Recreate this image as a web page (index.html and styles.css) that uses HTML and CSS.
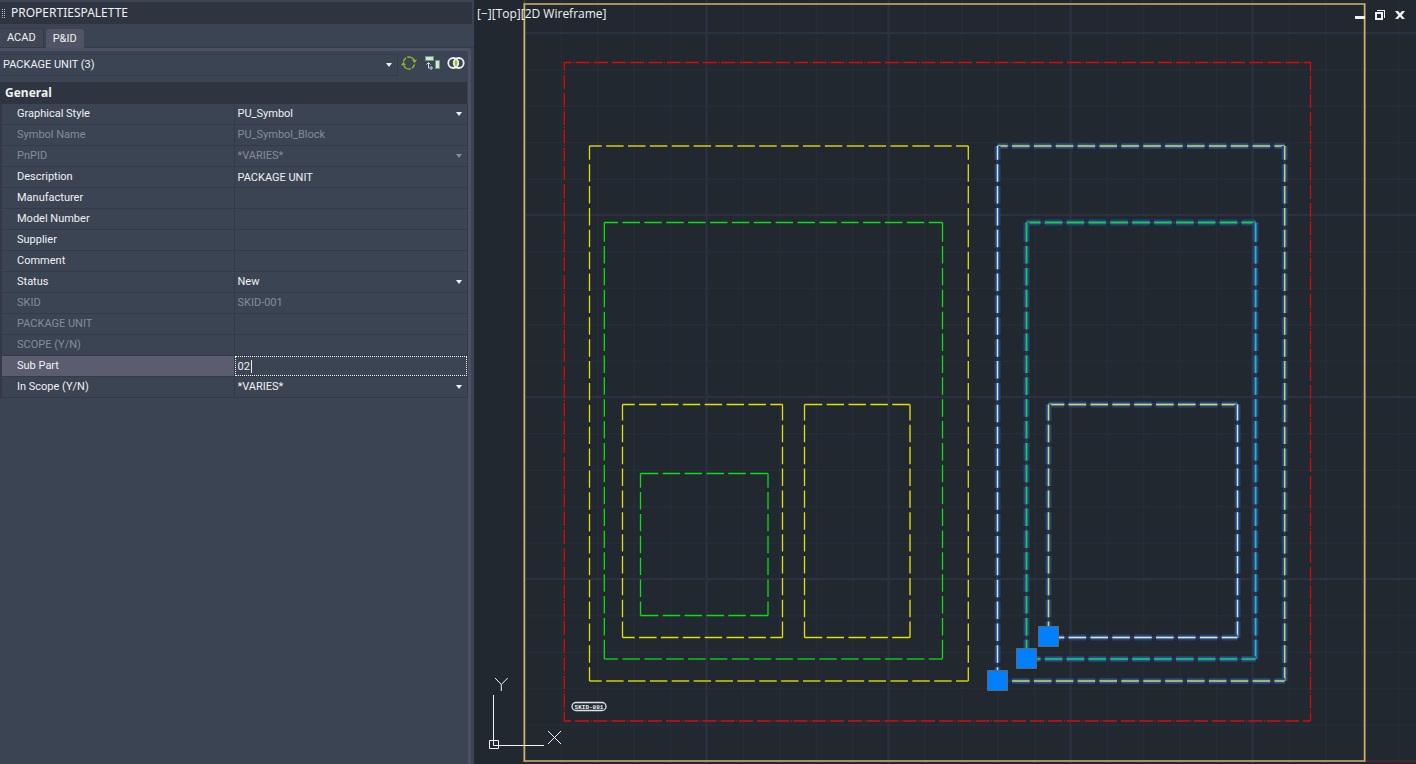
FILE: index.html
```html
<!DOCTYPE html>
<html lang="en">
<head>
<meta charset="utf-8">
<title>Properties palette</title>
<link rel="stylesheet" href="styles.css">
</head>
<body>
<div class="app">
  <aside class="palette">
    <header class="titlebar">
      <svg class="grip" width="4" height="9" viewBox="0 0 4 9" aria-hidden="true"><path d="M0 .5h1M0 2.5h1M0 4.5h1M0 6.5h1M0 8.5h1M2 .5h1M2 2.5h1M2 4.5h1M2 6.5h1M2 8.5h1" stroke="#b9bdc6"/></svg>
      <h1 class="title">PROPERTIESPALETTE</h1>
    </header>
    <nav class="tabs">
      <button class="tab" type="button">ACAD</button>
      <button class="tab tab-active" type="button">P&amp;ID</button>
    </nav>
    <div class="panel">
      <div class="selector">
        <div class="dropdown selection">
          <select class="field" aria-label="Selection"><option>PACKAGE UNIT (3)</option></select>
          <svg class="arrow" width="6" height="4" viewBox="0 0 6 4"><path d="M0 0h6L3 4z"/></svg>
        </div>
        <div class="tools">
          <button class="tool" type="button" aria-label="Refresh">
            <svg width="16" height="16" viewBox="0 0 16 16" fill="none" stroke="#8fb527" stroke-width="1.5"><path d="M2.500 6.500A5.800 5.800 0 0 1 5 3M6.300 2.300A5.800 5.800 0 0 1 13.300 5.500M13.500 9.500A5.800 5.800 0 0 1 11 13M9.700 13.700A5.800 5.800 0 0 1 2.700 10.500"/><path d="M11 4.800h5l-2.400 3.400zM0 10.200h5L2.400 6.800z" fill="#8fb527" stroke="none"/></svg>
          </button>
          <button class="tool" type="button" aria-label="Select by block">
            <svg width="16" height="16" viewBox="0 0 16 16" fill="none"><path d="M1.500 1.500h8v4h-8zM11.500 5.500h4v8h-4z" fill="#d3e6d3" stroke="#6f9d79"/><path d="M4.500 8v5H8M2.500 9.500L4.500 7.500 6.500 9.500M6.500 11L8.500 13 6.500 15" stroke="#d5d9de"/></svg>
          </button>
          <button class="tool" type="button" aria-label="Toggle selection">
            <svg width="18" height="16" viewBox="0 0 18 16" fill="none"><path d="M9 3.400A5.200 5.200 0 0 1 9 12.600 5.200 5.200 0 0 1 9 3.400z" fill="#9bbf2b"/><circle cx="6.300" cy="8" r="5" stroke="#eef0f2" stroke-width="1.800"/><circle cx="11.700" cy="8" r="5" stroke="#eef0f2" stroke-width="1.800"/></svg>
          </button>
        </div>
      </div>
      <h2 class="section">General</h2>
      <table class="props">
        <tbody>
          <tr><th scope="row"><label for="p1">Graphical Style</label></th><td><div class="dropdown"><select class="field" id="p1"><option>PU_Symbol</option></select><svg class="arrow" width="6" height="4" viewBox="0 0 6 4"><path d="M0 0h6L3 4z"/></svg></div></td></tr>
          <tr class="locked"><th scope="row">Symbol Name</th><td>PU_Symbol_Block</td></tr>
          <tr class="locked"><th scope="row"><label for="p3">PnPID</label></th><td><div class="dropdown"><select class="field" id="p3" disabled><option>*VARIES*</option></select><svg class="arrow" width="6" height="4" viewBox="0 0 6 4"><path d="M0 0h6L3 4z"/></svg></div></td></tr>
          <tr><th scope="row"><label for="p4">Description</label></th><td><input class="field" id="p4" value="PACKAGE UNIT"></td></tr>
          <tr><th scope="row"><label for="p5">Manufacturer</label></th><td><input class="field" id="p5"></td></tr>
          <tr><th scope="row"><label for="p6">Model Number</label></th><td><input class="field" id="p6"></td></tr>
          <tr><th scope="row"><label for="p7">Supplier</label></th><td><input class="field" id="p7"></td></tr>
          <tr><th scope="row"><label for="p8">Comment</label></th><td><input class="field" id="p8"></td></tr>
          <tr><th scope="row"><label for="p9">Status</label></th><td><div class="dropdown"><select class="field" id="p9"><option>New</option></select><svg class="arrow" width="6" height="4" viewBox="0 0 6 4"><path d="M0 0h6L3 4z"/></svg></div></td></tr>
          <tr class="locked"><th scope="row">SKID</th><td>SKID-001</td></tr>
          <tr class="locked"><th scope="row">PACKAGE UNIT</th><td></td></tr>
          <tr class="locked"><th scope="row">SCOPE (Y/N)</th><td></td></tr>
          <tr class="editing"><th scope="row"><label for="p13">Sub Part</label></th><td><div class="edit"><input class="field" id="p13" value="02"><span class="caret"></span></div></td></tr>
          <tr><th scope="row"><label for="p14">In Scope (Y/N)</label></th><td><div class="dropdown"><select class="field" id="p14"><option>*VARIES*</option></select><svg class="arrow" width="6" height="4" viewBox="0 0 6 4"><path d="M0 0h6L3 4z"/></svg></div></td></tr>
        </tbody>
      </table>
    </div>
  </aside>

  <main class="viewport">
    <svg class="drawing" viewBox="474 0 942 764" preserveAspectRatio="xMinYMin meet" fill="none" role="img" aria-label="Package unit drawing">
      <defs>
        <pattern id="minor" x="524.5" y="-3.4" width="36.4" height="36.4" patternUnits="userSpaceOnUse"><path d="M0 .5H36.400M.5 0V36.400" stroke="#272e38"/></pattern>
        <pattern id="major" x="705.500" y="32" width="182" height="182" patternUnits="userSpaceOnUse"><path d="M0 1H182M1 0V182" stroke="#2b313e" stroke-width="2"/></pattern>
      </defs>
      <path d="M525 0H1416V764H525z" fill="url(#minor)"/>
      <path d="M525 0H1416V764H525z" fill="url(#major)"/>
      <path d="M524.500 0V4" stroke="#1f5a30"/>
      <path d="M1365 761H1416" stroke="#4a262e" stroke-width="2"/>
      <rect x="524.300" y="4" width="840.400" height="757" stroke="#a98f5c" stroke-width="2"/>
      <path d="M524.500 4V761M1364.500 4V761" stroke="#cdb55f"/>
      <g class="skid">
        <path d="M564 62.500H1310" stroke-dashoffset="43"/>
        <path class="skid-bottom" d="M564 721H1310" stroke-dashoffset="80"/>
        <path d="M564.300 62V721" stroke-dashoffset="60"/>
        <path d="M1310.500 62V721" stroke-dashoffset="41"/>
      </g>
      <g id="outlines"></g>
      <g class="grips">
        <path d="M987.500 670.500h20v20h-20zM1016.500 648.500h20v20h-20zM1038.500 626.500h20v20h-20z"/>
      </g>
      <rect x="572" y="702.500" width="34" height="8" rx="4" stroke="#dfe2e4" stroke-width="1.300"/>
      <text class="tag" x="589" y="708.700" text-anchor="middle">SKID-001</text>
      <g stroke="#f1f3f4">
        <path d="M493.500 695V745.500H544M489.500 740.500h9v8h-9z"/>
        <path d="M495 678L501.300 684.500 507.700 678M501.300 684.500V691M548 731L561 744M561 731L548 744"/>
      </g>
    </svg>
    <div class="view-controls">
      <button type="button">[−]</button><button type="button">[Top]</button><button type="button">[2D Wireframe]</button>
    </div>
    <div class="window-controls">
      <button type="button" aria-label="Minimize"><svg width="12" height="12" viewBox="0 0 12 12"><path d="M1 7h10v3H1z"/></svg></button>
      <button type="button" aria-label="Restore"><svg width="12" height="12" viewBox="0 0 12 12"><path fill-rule="evenodd" d="M1 3h8v8H1zM3 5v4h4V5zM3 1h8v8H10V2H3z"/></svg></button>
      <button type="button" aria-label="Close"><svg width="12" height="12" viewBox="0 0 12 12"><path d="M1 2h3l2 2.300L8 2h3L7.700 6.300 11 10H8L6 7.800 4 10H1L4.300 6.300z"/></svg></button>
    </div>
  </main>
</div>
<script src="outlines.js"></script>
</body>
</html>
```
FILE: outlines.js
```
const DASH = 17.5;
const GAP = 4.4;
const PERIOD = 21.87;

// Each edge starts and ends on a dash of equal length, with full dashes between.
function dashes(length) {
  const count = Math.floor((length - GAP - DASH) / PERIOD);
  const end = (length - GAP - count * PERIOD) / 2;
  const list = [end, GAP];
  for (let i = 0; i < count; i++) list.push(PERIOD - GAP, GAP);
  list.push(end);
  return list.join(" ");
}

// Edge colours run top, right, bottom, left.
const outlines = [
  { box: [589.5, 146, 968.3, 681], colors: ["yellow-soft", "yellow", "yellow-soft", "yellow"] },
  { box: [604.3, 222.5, 942.5, 659], colors: ["green", "green", "green-soft", "green"] },
  { box: [622.5, 404.5, 782.5, 637.5], colors: ["yellow", "yellow", "yellow", "yellow"] },
  { box: [804.5, 404.5, 910, 637.5], colors: ["yellow", "yellow-soft", "yellow", "yellow"] },
  { box: [640.5, 473.5, 768, 615.5], colors: ["green", "green-soft", "green", "green"] },
  { box: [997.5, 146, 1284.7, 681], selected: true, colors: ["lime-soft", "lime", "lime-soft", "pale"] },
  { box: [1026.5, 222.5, 1255.6, 659], selected: true, colors: ["green", "cyan", "teal", "green"] },
  { box: [1048.5, 404.5, 1237.5, 637.5], selected: true, colors: ["lime", "pale", "pale", "lime"] }
];

const layer = document.getElementById("outlines");

function addLine(x1, y1, x2, y2, name, pattern) {
  const line = document.createElementNS("http://www.w3.org/2000/svg", "path");
  line.setAttribute("d", `M${x1} ${y1}L${x2} ${y2}`);
  line.setAttribute("class", name);
  if (pattern) line.setAttribute("stroke-dasharray", pattern);
  layer.appendChild(line);
}

for (const { box: [l, t, r, b], colors, selected } of outlines) {
  const edges = [[l, t, r, t], [r, t, r, b], [l, b, r, b], [l, t, l, b]];
  edges.forEach((edge, i) => {
    const pattern = dashes(edge[2] - edge[0] + edge[3] - edge[1]);
    if (selected) {
      addLine(...edge, "halo-base");
      addLine(...edge, "halo-wide", pattern);
      addLine(...edge, "halo", pattern);
    }
    addLine(...edge, colors[i], pattern);
  });
}
```
FILE: styles.css
```css
* { box-sizing: border-box; }

body {
  margin: 0;
  background: #222830;
  color: #f0f1f3;
  font: 11px/16px "DejaVu Sans Condensed", "Open Sans", sans-serif;
}

button, input, select {
  margin: 0;
  padding: 0;
  border: 0;
  border-radius: 0;
  background: none;
  color: inherit;
  font: inherit;
}

h1, h2 { margin: 0; }

.app {
  display: grid;
  grid-template-columns: 474px 1fr;
  min-height: 100vh;
}

.palette {
  display: flex;
  flex-direction: column;
  background: #3b4453;
  font-family: Roboto, "Open Sans", sans-serif;
}

.titlebar {
  display: flex;
  align-items: center;
  gap: 5px;
  height: 24px;
  margin-right: 2px;
  padding: 0 2px;
  border-top: 2px solid #3b4453;
  background: #2e3440;
}

.title {
  font-family: "Noto Sans", "Open Sans", sans-serif;
  font-size: 12px;
  font-weight: 400;
}

.tabs {
  display: flex;
  align-items: flex-end;
  gap: 2px;
  height: 24px;
  border-bottom: 1px solid #353a48;
}

.tab {
  height: 19px;
  padding: 0 7px;
  border: 1px solid #363b49;
  border-left: 0;
  border-bottom: 0;
  border-radius: 0 3px 0 0;
  background: #414654;
}

.tab-active {
  border: 0;
  border-radius: 3px 3px 0 0;
  background: #505466;
  margin-bottom: -1px;
}

.panel {
  flex: 1;
  margin-right: 3px;
  border-top: 3px solid #4d5062;
  border-right: 3px solid #4d5062;
  border-radius: 0 3px 0 0;
}

.selector {
  display: flex;
  gap: 3px;
  padding: 3px 3px 6px 0;
}

.selection {
  flex: 1;
  border: 1px solid #353b48;
  border-left: 0;
}

.dropdown {
  display: grid;
  align-items: center;
}

.dropdown > * { grid-area: 1 / 1; }

.arrow {
  justify-self: end;
  margin-right: 5px;
  fill: currentColor;
  pointer-events: none;
}

.field {
  display: block;
  width: 100%;
  height: 20px;
  padding: 0 3px;
  appearance: none;
  outline: 0;
  opacity: 1;
}

.tools {
  display: flex;
  gap: 7px;
}

.tool { height: 18px; }
.tool svg { display: block; }

.section {
  height: 22px;
  margin-right: 1px;
  padding: 0 5px;
  background: #2e3440;
  font-family: "Noto Sans", "Open Sans", sans-serif;
  font-size: 12px;
  line-height: 22px;
}

.props {
  width: 100%;
  border-collapse: separate;
  border-spacing: 0;
  border-left: 2px solid #353945;
  border-right: 1px solid #353945;
  table-layout: fixed;
}

.props th, .props td {
  height: 21px;
  padding: 0;
  border-bottom: 1px solid #363a48;
  text-align: left;
  font-weight: 400;
}

.props th {
  width: 50%;
  padding-left: 15px;
  border-right: 1px solid #363a48;
}

.locked { color: #868c98; }
.locked td { padding-left: 3px; }
.locked .dropdown { margin-left: -3px; }

.editing th { background: #5c5c70; }

.edit {
  display: grid;
  align-items: center;
  border: 1px dotted #f4f5f6;
}

.edit > * { grid-area: 1 / 1; }
.edit .field { height: 18px; padding: 0 2px; }

.caret {
  width: 1px;
  height: 13px;
  margin-left: 15px;
  background: #e8eaec;
}

.viewport {
  position: relative;
  overflow: hidden;
  min-width: 0;
}

.drawing {
  display: block;
  width: 100%;
}

.skid path {
  stroke: #dc0808;
  stroke-width: 1.3;
  stroke-dasharray: 14.2 1.5 1 1.5 14.2 1.5 1 1.5 14.2 1.5 1 1.5 14.2 1.5 1 1.5 14.2 4;
}

.skid .skid-bottom { stroke: #a91217; stroke-width: 2; }

.yellow { stroke: #e0df07; stroke-width: 1.3; }
.yellow-soft { stroke: #a6a511; stroke-width: 2; }
.green { stroke: #08df13; stroke-width: 1.3; }
.green-soft { stroke: #139c22; stroke-width: 2; }
.lime { stroke: #d2dc3c; stroke-width: 1.3; }
.lime-soft { stroke: #a6b85a; stroke-width: 2; }
.pale { stroke: #dbe5b0; stroke-width: 1.3; }
.cyan { stroke: #1fc59a; stroke-width: 1.3; }
.teal { stroke: #16b46e; stroke-width: 2; }
.halo-base { stroke: #24345b; stroke-width: 3; }
.halo-wide { stroke: #264075; stroke-width: 6; }
.halo { stroke: #2f5cab; stroke-width: 3; }

.grips { fill: #0080ff; stroke: #5f6974; }

.tag {
  fill: #f1f3f4;
  font: bold 6px "Liberation Mono", monospace;
}

.view-controls {
  position: absolute;
  top: 6px;
  left: 3px;
  display: flex;
  font-family: "Open Sans", "Noto Sans", sans-serif;
  font-size: 12px;
}

.window-controls {
  position: absolute;
  top: 9px;
  right: 10px;
  display: flex;
  gap: 8px;
  fill: #f0f0f0;
}

.window-controls svg { display: block; }
```
